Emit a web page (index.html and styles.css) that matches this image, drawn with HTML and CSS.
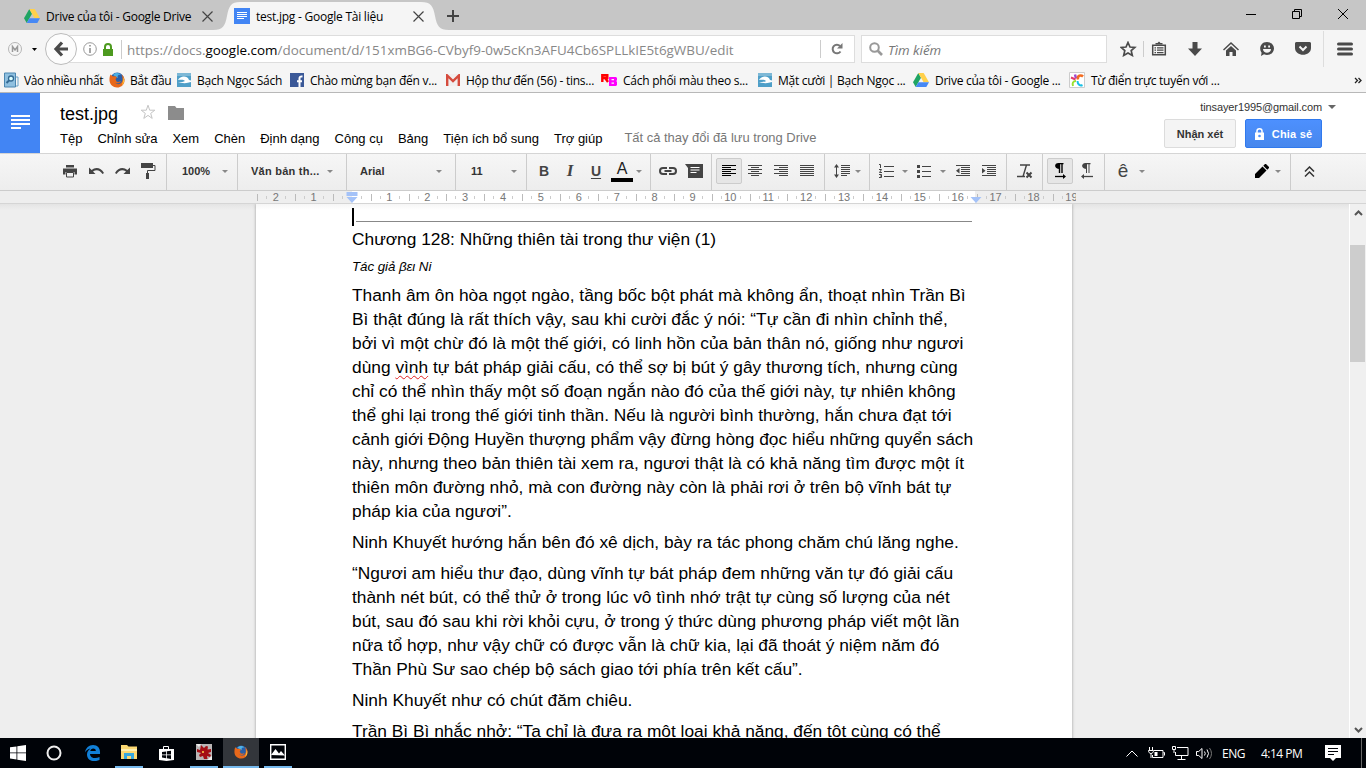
FILE: index.html
```html
<!DOCTYPE html>
<html lang="vi">
  <head>
    <meta charset="utf-8" />
    <title>test.jpg - Google Tài liệu</title>
    <link rel="stylesheet" href="styles.css">
  </head>
  <body>
    <!-- shared icons -->
    <svg width="0" height="0" class="defs">
      <symbol id="drive" viewBox="0 0 16 16">
        <path d="M5.3 1 0 10.2 2.7 15 8 5.7z" fill="#1fa463" />
        <path d="M5.3 1h5.4L16 10.2h-5.4z" fill="#ffd04b" />
        <path d="M5.4 10.2H16L13.3 15H2.7z" fill="#4688f4" />
      </symbol>
      <symbol id="wave" viewBox="0 0 14 14">
        <path d="M0 0h14v14H0z" fill="#4f9fc8" />
        <path d="M0 0h14v3H0z" fill="#7db8d6" />
        <path d="M1 7c2-4 9-5 11 0l2 .5V9c-4 1.500-9 1.500-13 0 3 0 6 0 7-1-1-1.500-4-1.500-7-1z" fill="#fff" />
      </symbol>
      <symbol id="fox" viewBox="0 0 16 16">
        <circle cx="8.2" cy="7.6" r="7" fill="#2a5fa8" />
        <path d="M4 3c2-3 7-2 8 0-3-1-4 1-3 3z" fill="#4db1e6" />
        <path d="M1.5 2.5 4 4.5c2-.5 3 0 4 1L6.5 7l1 2.500c2 1 3 0 4.500-.500-1 2.500-4 3-6 1.500 3 3.500 8 1 7.500-4C13.500 4 12.500 2.500 12 2c2.500 1.500 4 4.500 3.500 7.500-.8 4-4 6.200-7.500 6-4-.2-7.200-3-7.500-7C.4 6 .7 4 1.500 2.500z" fill="#e8681a" />
        <path d="M14.500 5c1.300 3 .8 6.500-2 8.700 1-2.200 2-5.200 2-8.700z" fill="#ffcb3d" />
      </symbol>
    </svg>

    <div class="tabs">
      <div class="tab">
        <svg width="16" height="16"><use href="#drive" /></svg>
        <span class="tab-title">Drive của tôi - Google Drive</span>
        <svg class="close" width="11" height="11"><path d="M.5.5l10 10m0-10-10 10" /></svg>
      </div>
      <div class="tab active">
        <svg class="tab-shape" width="236" height="28"><path d="M0 28c10 0 12-4 14-14C16 4 18 0 27 0h181c10 0 12 4 14 14s4 14 14 14z" fill="#f5f5f5" /></svg>
        <svg width="16" height="16"><path d="M0 0h16v16H0z" fill="#4285f4" /><path d="M3 4.500h10M3 6.500h10M3 8.500h10M3 10.500h7" stroke="#fff" /></svg>
        <span class="tab-title">test.jpg - Google Tài liệu</span>
        <svg class="close" width="11" height="11"><path d="M.5.5l10 10m0-10-10 10" /></svg>
      </div>
      <svg class="new-tab" width="12" height="12"><path d="M6 0v12M0 6h12" stroke="#444" stroke-width="2" /></svg>
      <div class="window-buttons">
        <svg width="12" height="12"><path d="M1 6.500h10" /></svg>
        <svg width="12" height="12"><path d="M1.500 3.500h7v7h-7zM3.500 3V1.500h7v7H9" /></svg>
        <svg width="12" height="12"><path d="M1 1l10 10m0-10L1 11" /></svg>
      </div>
    </div>

    <div class="nav">
      <svg class="gmail-m" width="14" height="14"><circle cx="7" cy="7" r="6.500" fill="none" stroke="#b5b5b5" /><path d="M4.500 10V4.500L7 8l2.500-3.500V10" fill="none" stroke="#999" stroke-width="1.500" /></svg>
      <svg class="nav-arrow" width="5" height="3"><path d="M0 0h5L2.500 3z" /></svg>
      <div class="back">
        <svg width="16" height="16"><path d="M9 1.500 3 8l6 6.500M3 8h12" fill="none" stroke="#4a4a4a" stroke-width="3.200" /></svg>
      </div>
      <div class="url">
        <svg width="14" height="14"><circle cx="7" cy="7" r="6.300" fill="none" stroke="#999" /><path d="M7 6v5M7 3v1.500" stroke="#888" stroke-width="1.500" /></svg>
        <svg class="lock" width="10" height="13"><path d="M0 6h10v7H0z" fill="#4d9a1f" /><path d="M2 7V4c0-4 6-4 6 0v3" fill="none" stroke="#4d9a1f" stroke-width="2" /></svg>
        <span class="address">https://docs.<b>google.com</b>/document/d/151xmBG6-CVbyf9-0w5cKn3AFU4Cb6SPLLkIE5t6gWBU/edit</span>
        <div class="reload">
          <svg width="12" height="12"><path d="M9.500 8.500A4.300 4.300 0 1 1 9 3" fill="none" stroke="#777" stroke-width="2" /><path d="M11.500 0v5.500H6z" fill="#777" /></svg>
        </div>
      </div>
      <div class="search">
        <svg width="14" height="14"><circle cx="5.500" cy="5.500" r="4.300" fill="none" stroke="#999" stroke-width="2" /><path d="M8.500 8.500l4.500 4.500" stroke="#999" stroke-width="2.600" /></svg>
        <span>Tìm kiếm</span>
      </div>
      <div class="nav-icons">
        <svg width="16" height="16"><path d="M8 1.500l2 4.500 4.800.4-3.600 3.200 1.100 4.800L8 11.900l-4.300 2.500 1.100-4.800L1.200 6.400 6 6z" fill="none" stroke="#4a4a4a" stroke-width="1.700" /></svg>
        <svg width="16" height="16"><path d="M1.700 4.200h12.600v9.600H1.700z" fill="none" stroke="#4a4a4a" stroke-width="1.500" /><path d="M4.500 3.500V2H6.500L8 .5 9.500 2h2v1.500z" fill="#4a4a4a" /><path d="M3.500 6.800h1.500M6 6.800h6.500M3.500 9.200h1.500M6 9.200h6.500M3.500 11.600h1.500M6 11.600h6.500" stroke="#4a4a4a" stroke-width="1.200" /></svg>
        <svg width="16" height="16"><path d="M5.500 1h5v6.500H15L8 15 1 7.500h4.500z" fill="#4a4a4a" /></svg>
        <svg width="16" height="16"><path d="M0 8.500 8 1l8 7.500-1 1L8 3 1 9.500z M3 9.500 8 5l5 4.500V15H9.500v-4h-3v4H3z" fill="#4a4a4a" /></svg>
        <svg width="16" height="16"><path d="M8 1c4 0 7 3 7 6.500S12 14 8 14c-1 0-2-.2-3-.7L2 15l.6-3.300C0 9 .6 1 8 1z" fill="#4a4a4a" /><path d="M4 8h8c0 5-8 5-8 0zM5 4.500h1.800v2H5zM9.200 4.500H11v2H9.200z" fill="#f5f5f5" /></svg>
        <svg width="16" height="16"><path d="M1.500 1h13C16 1 16 2 16 3v4c0 9-16 9-16 0V3c0-1 0-2 1.500-2z" fill="#4a4a4a" /><path d="M4.500 5.500 8 9l3.500-3.500" fill="none" stroke="#f5f5f5" stroke-width="2" /></svg>
      </div>
      <div class="menu-button">
        <svg width="16" height="14"><path d="M1.500 2h13M1.500 7h13M1.500 12h13" stroke="#4a4a4a" stroke-width="3" stroke-linecap="round" /></svg>
      </div>
    </div>

    <div class="bookmarks">
      <div class="bookmark b1"><svg width="15" height="16"><path d="M.5 1h11v14H.5z" fill="#8fc0e0" stroke="#4b86b0" /><path d="M12 5h2v9h-2" fill="none" stroke="#6ba3c8" /><circle cx="7" cy="6.500" r="2.500" fill="#dff" stroke="#346a94" stroke-width="1.300" /><path d="M5 8.500 2.500 11" stroke="#346a94" stroke-width="2" /></svg><span>Vào nhiều nhất</span></div>
      <div class="bookmark b2"><svg width="16" height="16"><use href="#fox" /></svg><span>Bắt đầu</span></div>
      <div class="bookmark b3"><svg width="14" height="14"><use href="#wave" /></svg><span>Bạch Ngọc Sách</span></div>
      <div class="bookmark b4"><svg width="14" height="14"><path d="M0 0h14v14H0z" fill="#3b5998" /><path d="M9.500 14V8.500M7 8.200h5M9.500 9V5.500Q9.500 3 12.500 3.500" fill="none" stroke="#fff" stroke-width="2" /></svg><span>Chào mừng bạn đến v...</span></div>
      <div class="bookmark b5"><svg width="14" height="12"><path d="M0 0h14v12H0z" fill="#f1eeee" /><path d="M1.200 12V1.500L7 7l5.800-5.500V12" fill="none" stroke="#d54b3d" stroke-width="2.400" /></svg><span>Hộp thư đến (56) - tins...</span></div>
      <div class="bookmark b6"><svg width="16" height="14"><path d="M1.300 9V2.300h5v2.700H2M4.500 5.500 7 9" fill="none" stroke="#f00" stroke-width="2.400" /><path d="M8 4h7l1 1v2l-.7 1 .7 1v3l-1 1H8z" fill="#f0f" /><path d="M10.500 6h2.500v1.200h-2.500zM10.500 9.500h2.500v1.200h-2.500z" fill="#f5f5f5" /></svg><span>Cách phối màu theo s...</span></div>
      <div class="bookmark b7"><svg width="14" height="14"><use href="#wave" /></svg><span>Mặt cười | Bạch Ngọc ...</span></div>
      <div class="bookmark b8"><svg width="16" height="16"><use href="#drive" /></svg><span>Drive của tôi - Google ...</span></div>
      <div class="bookmark b9"><svg width="16" height="16"><path d="M.5.5h15v15H.5z" fill="#fff" stroke="#ccc" /><path d="M7 6.500 6 2.500" stroke="#a04ad0" stroke-width="2.500" /><path d="M6.500 7.500 2 5.500" stroke="#e23c6b" stroke-width="2" /><path d="M9 7.500c-1-4 3-5 5-3" stroke="#f36c21" stroke-width="2.500" fill="none" /><path d="M7 9c-3 0-4 2-3 5" stroke="#9be030" stroke-width="2" fill="none" /><path d="M8.500 9c0 4 3 5 5 4" stroke="#19c0e5" stroke-width="2" fill="none" /></svg><span>Từ điển trực tuyến với ...</span></div>
      <svg class="more" width="8" height="7"><path d="M1 1l2.500 2.500L1 6M4.500 1 7 3.500 4.500 6" fill="none" stroke="#222" stroke-width="1.300" /></svg>
    </div>

    <div class="header">
      <div class="logo">
        <svg width="19" height="14"><path d="M0 1h19M0 5h19M0 9h19M0 13h10" stroke="#fff" stroke-width="2" /></svg>
      </div>
      <div class="title-area">
        <div class="title-row">
          <span class="title">test.jpg</span>
          <svg class="star" width="16" height="16"><path d="M8 1.200l1.700 5h5.100l-4.100 3.200 1.500 5L8 11.400l-4.200 3 1.500-5L1.200 6.200h5.100z" fill="none" stroke="#c4c4c4" /></svg>
          <svg width="16" height="14"><path d="M0 0h7l1.500 2H16v12H0z" fill="#8c8c8c" /></svg>
        </div>
        <div class="menus">
          <span>Tệp</span><span>Chỉnh sửa</span><span>Xem</span><span>Chèn</span><span>Định dạng</span><span>Công cụ</span><span>Bảng</span><span>Tiện ích bổ sung</span><span>Trợ giúp</span><span class="saved">Tất cả thay đổi đã lưu trong Drive</span>
        </div>
      </div>
      <div class="account">
        <div class="email"><span>tinsayer1995@gmail.com</span> <i class="caret"></i></div>
        <div class="actions">
          <div class="button">Nhận xét</div>
          <div class="button share">
            <svg width="9" height="12"><path d="M0 4.500h9V12H0z" fill="#fff" /><path d="M2 5V3c0-3 5-3 5 0v2" fill="none" stroke="#fff" stroke-width="1.500" /><circle cx="4.500" cy="8" r="1.300" fill="#4d90fe" /></svg>
            Chia sẻ
          </div>
        </div>
      </div>
    </div>

    <div class="toolbar">
      <div class="group g1">
        <div class="tool"><svg width="14" height="14"><path d="M3 1h8v2.500H3zM0 4.500h14v6h-2.500V8h-9v2.500H0z" fill="#444" /><path d="M3.500 8.500h7v4.500h-7z" fill="none" stroke="#444" /></svg></div>
        <div class="tool"><svg width="15" height="14"><path d="M0 3.500V10h6.500L4 7.500C7.500 5 11 6 13.500 10L15 9C12 3.500 6.500 2.500 2.600 6z" fill="#444" /></svg></div>
        <div class="tool"><svg width="15" height="14"><path d="M15 3.500V10H8.500L11 7.500C7.500 5 4 6 1.500 10L0 9C3 3.500 8.500 2.500 12.400 6z" fill="#444" /></svg></div>
        <div class="tool"><svg width="15" height="16"><path d="M0 0h12v5H0z" fill="#444" /><path d="M12 2.500h2v5H6.500V16" fill="none" stroke="#444" /><path d="M5 10h3v6H5z" fill="#444" /></svg></div>
      </div>
      <div class="group select g2"><span>100%</span><i class="caret"></i></div>
      <div class="group select g3"><span>Văn bản th...</span><i class="caret"></i></div>
      <div class="group select g4"><span>Arial</span><i class="caret"></i></div>
      <div class="group select g5"><span>11</span><i class="caret"></i></div>
      <div class="group g6">
        <div class="tool bold">B</div>
        <div class="tool italic">I</div>
        <div class="tool underline">U</div>
        <div class="tool color">A</div>
        <i class="caret"></i>
      </div>
      <div class="group g7">
        <div class="tool"><svg width="18" height="8"><path d="M8 1H4C0 1 0 7 4 7h4M10 1h4c4 0 4 6 0 6h-4M5.500 4h7" fill="none" stroke="#444" stroke-width="2" /></svg></div>
        <div class="tool"><svg width="18" height="15"><path d="M0 0h18v14H3V4z" fill="#444" /><path d="M5.500 3.500h9M5.500 6h9M5.500 8.500h6" stroke="#fff" /></svg></div>
      </div>
      <div class="group g8">
        <div class="tool pressed"><svg width="14" height="12"><path d="M0 .5h14M0 2.500h9M0 4.500h14M0 6.500h9M0 8.500h14M0 10.500h9" stroke="#000" /></svg></div>
        <div class="tool"><svg width="14" height="12"><path d="M0 .5h14M3 2.500h8M0 4.500h14M3 6.500h8M0 8.500h14M3 10.500h8" stroke="#444" /></svg></div>
        <div class="tool"><svg width="14" height="12"><path d="M0 .5h14M5 2.500h9M0 4.500h14M5 6.500h9M0 8.500h14M5 10.500h9" stroke="#444" /></svg></div>
        <div class="tool"><svg width="14" height="12"><path d="M0 .5h14M0 2.500h14M0 4.500h14M0 6.500h14M0 8.500h14M0 10.500h14" stroke="#444" /></svg></div>
      </div>
      <div class="group g9">
        <div class="tool"><svg width="17" height="14"><path d="M2.500 2v10M7 1.500h9M7 3.500h9M7 5.500h9M7 7.500h9M7 9.500h9M7 11.500h6" stroke="#444" /><path d="M0 3.500 2.500 0 5 3.500zM0 10.500 2.500 14 5 10.500z" fill="#444" /></svg></div>
        <i class="caret"></i>
      </div>
      <div class="group g10">
        <div class="tool"><svg width="15" height="14"><path d="M5 2.500h10M5 7.500h10M5 12.500h10M0 .500h1.500V4M0 5.500h2.500L.500 8.500H3M0 10.500h2.500v3H0M1 12h1.500" fill="none" stroke="#444" /></svg></div>
        <i class="caret"></i>
        <div class="tool"><svg width="14" height="14"><path d="M5 2.500h9M5 7.500h9M5 12.500h9" stroke="#444" /><path d="M0 1h3v3H0zM0 6h3v3H0zM0 11h3v3H0z" fill="#444" /></svg></div>
        <i class="caret"></i>
        <div class="tool"><svg width="14" height="12"><path d="M0 .5h14M5 2.500h9M5 4.500h9M5 6.500h9M5 8.500h9M0 10.500h14" stroke="#444" /><path d="M3.500 3v5.500L0 5.700z" fill="#444" /></svg></div>
        <div class="tool"><svg width="14" height="12"><path d="M0 .5h14M5 2.500h9M5 4.500h9M5 6.500h9M5 8.500h9M0 10.500h14" stroke="#444" /><path d="M0 3v5.500l3.500-2.800z" fill="#444" /></svg></div>
      </div>
      <div class="group g11">
        <div class="tool"><svg width="16" height="15"><path d="M3 1h10M9.500 1 6 12.500M0 12.500h8" fill="none" stroke="#444" stroke-width="1.400" /><path d="M9.500 8.500l5 5m0-5-5 5" stroke="#444" stroke-width="2" /></svg></div>
      </div>
      <div class="group g12">
        <div class="tool pressed"><svg width="13" height="16"><path d="M5.500 10V1M8 10V1" stroke="#000" stroke-width="1.400" /><path d="M9.500 0v1.200H6V6C-.5 6 0 0 4.500 0z" /><path d="M1 13.500h9" stroke="#000" stroke-width="1.300" /><path d="M9 11v5l3-2.500z" /></svg></div>
        <div class="tool"><svg width="13" height="16"><path d="M6.500 10V1M9 10V1" stroke="#444" /><path d="M10.500 0v1.200H7V6C.5 6 1 0 5.500 0z" fill="#444" /><path d="M3 13.500h10" stroke="#444" stroke-width="1.300" /><path d="M4 11v5l-3-2.500z" fill="#444" /></svg></div>
      </div>
      <div class="group g13">
        <div class="tool input-tool">ê</div>
        <i class="caret"></i>
        <div class="tool pencil"><svg width="14" height="14"><path d="M0 14v-4L7.500 2.500l4 4L4 14zM8.300 1.700 10 0h1l3 3v1l-1.700 1.700z" fill="#000" /></svg></div>
        <i class="caret"></i>
      </div>
      <div class="tool collapse"><svg width="11" height="11"><path d="M1 5.500 5.500 1 10 5.500M1 10.500 5.500 6l4.500 4.500" fill="none" stroke="#333" stroke-width="1.500" /></svg></div>
    </div>

    <div class="ruler">
      <div class="scale">
        <span>2</span><span>1</span><span></span><span>1</span><span>2</span><span>3</span><span>4</span><span>5</span><span>6</span><span>7</span><span>8</span><span>9</span><span>10</span><span>11</span><span>12</span><span>13</span><span>14</span><span>15</span><span>16</span><span>17</span><span>18</span><span>19</span>
        <svg class="marker left" width="12" height="12"><path d="M.500 0h11v4H.500zM.500 5h11L6 11z" fill="#a4c2f8" /></svg>
        <svg class="marker right" width="12" height="6"><path d="M.500 0h11L6 6z" fill="#a4c2f8" /></svg>
      </div>
    </div>

    <div class="workspace">
      <div class="page">
        <div class="rule"><i class="text-cursor"></i></div>
        <p>Chương 128: Những thiên tài trong thư viện (1)</p>
        <p class="author">Tác giả βει Ni</p>
        <p>Thanh âm ôn hòa ngọt ngào, tầng bốc bột phát mà không ẩn, thoạt nhìn Trần Bì<br>
          Bì thật đúng là rất thích vậy, sau khi cười đắc ý nói: “Tự cần đi nhìn chỉnh thể,<br>
          bởi vì một chừ đó là một thế giới, có linh hồn của bản thân nó, giống như ngươi<br>
          dùng <span class="misspelled">vình</span> tự bát pháp giải cấu, có thể sợ bị bút ý gây thương tích, nhưng cùng<br>
          chỉ có thể nhìn thấy một số đoạn ngắn nào đó của thế giới này, tự nhiên không<br>
          thể ghi lại trong thế giới tinh thần. Nếu là người bình thường, hắn chưa đạt tới<br>
          cảnh giới Động Huyền thượng phẩm vậy đừng hòng đọc hiểu những quyển sách<br>
          này, nhưng theo bản thiên tài xem ra, ngươi thật là có khả năng tìm được một ít<br>
          thiên môn đường nhỏ, mà con đường này còn là phải rơi ở trên bộ vĩnh bát tự<br>
          pháp kia của ngươi”.</p>
        <p>Ninh Khuyết hướng hắn bên đó xê dịch, bày ra tác phong chăm chú lăng nghe.</p>
        <p>“Ngươi am hiểu thư đạo, dùng vĩnh tự bát pháp đem những văn tự đó giải cấu<br>
          thành nét bút, có thể thử ở trong lúc vô tình nhớ trật tự cùng số lượng của nét<br>
          bút, sau đó sau khi rời khỏi cựu, ở trong ý thức dùng phương pháp viết một lần<br>
          nữa tổ hợp, như vậy chữ có được vẫn là chữ kia, lại đã thoát ý niệm năm đó<br>
          Thần Phù Sư sao chép bộ sách giao tới phía trên kết cấu”.</p>
        <p>Ninh Khuyết như có chút đăm chiêu.</p>
        <p>Trần Bì Bì nhắc nhở: “Ta chỉ là đưa ra một loại khả năng, đến tột cùng có thể</p>
      </div>
      <div class="scrollbar">
        <svg width="9" height="6"><path d="M1 5l3.500-3.500L8 5" /></svg>
        <div class="thumb"></div>
        <svg width="9" height="6"><path d="M1 1l3.500 3.500L8 1" /></svg>
      </div>
    </div>

    <div class="taskbar">
      <div class="app"><svg width="16" height="16"><path d="M0 2.300 6.500 1.400v6H0zM7.300 1.300 16 0v7.400H7.300zM0 8.300h6.500v6.200L0 13.600zM7.300 8.300H16V16l-8.700-1.300z" fill="#fff" /></svg></div>
      <div class="app"><svg width="16" height="16"><circle cx="8" cy="8" r="6.500" fill="none" stroke="#eee" stroke-width="2" /></svg></div>
      <div class="app edge"><svg width="16" height="16"><path d="M0 7.500C.5 3 4 0 8 0c5 0 7.500 3.500 7 9H5c.2 4.500 6 5 9.500 3v3C9 17.500 2 16 2 9.500c0-3 1.500-4.500 3.500-6C3 4 1 5.500 0 7.500zM5.300 6h5.500C11 2.500 5.500 2.500 5.300 6z" fill="#1180d8" /></svg></div>
      <div class="app open"><svg width="16" height="14"><path d="M0 0h6l1.500 1.500H16V14H0z" fill="#fbd872" /><path d="M0 4h16v2H0z" fill="#fff0b0" /><path d="M3 14V8h10v6h-3v-3H6v3z" fill="#37a8de" /></svg></div>
      <div class="app"><svg width="15" height="16"><path d="M0 4h15v11L7.500 16 0 15z" fill="#fff" /><path d="M4.500 4V1.500h5V4" fill="none" stroke="#fff" /><path d="M3 7l4-.6v3H3zM7.800 6.300 12 5.700v3.700H7.800zM3 10.200h4v3l-4-.6zM7.800 10.200H12v3.700l-4.200-.6z" fill="#000308" /></svg></div>
      <div class="app open red"><svg width="16" height="16"><path d="M0 0h16v16H0z" fill="#b9b5b5" /><path d="M0 0h5l-2 3zM11 16l5-4v4z" fill="#eee" /><path d="M5 1l3 3 2-2 2 .5-.5 3L15 5v3l-3 1 3 2-1 2-3-1 .5 3H8l-1-3-3 1-1-2 2-2-4-1V5l3 1z" fill="#a40e14" /><path d="M6 7h2v2H6z" fill="#e9a13d" /></svg></div>
      <div class="app open current"><svg width="14" height="14"><use href="#fox" /></svg></div>
      <div class="app open photos"><svg width="16" height="16"><path d="M.7.700h14.600v14.600H.7z" fill="#000308" stroke="#fff" stroke-width="1.400" /><path d="M1 11 5.500 5 9 9.500 11 7l4 4.500z" fill="#fff" /></svg></div>
      <div class="tray">
        <svg width="12" height="7"><path d="M.5 6.500 6 1l5.500 5.500" /></svg>
        <svg class="battery" width="17" height="12"><path d="M6 3.500h9v7H4.500V8M15.500 5.500h1v3M1.500 0v3M4.500 0v3M.5 3.500h5c0 4-5 4-5 0zM3 6v5" /><path d="M6.500 5h3v4h-3z" fill="#fff" stroke="none" /></svg>
        <svg class="network" width="17" height="14"><path d="M5 1.500h11v8H3.500V6M9.500 10v3M5.500 13.500h8M.5.500h3v3h-3zM2 4v3" /></svg>
        <svg class="volume" width="16" height="13"><path d="M.5 4.500h2.200L6 1.500v10L2.700 8.500H.5zM8.500 4.500q1.500 2 0 4M11 2.500q3 4 0 8" /><path d="M13.500 1q4 5.500 0 11" stroke="#777" /></svg>
        <span class="lang">ENG</span>
        <span class="clock">4:14 PM</span>
        <svg class="notice" width="16" height="16"><path d="M0 0h16v13h-5l-3 3-3-3H0z" fill="#fff" stroke="none" /><path d="M3 3.500h10M3 6.500h10M3 9.500h6" stroke="#000308" /></svg>
        <div class="show-desktop"></div>
      </div>
    </div>
  </body>
</html>
```
FILE: styles.css
```css
* {
  margin: 0;
  padding: 0;
  box-sizing: border-box;
}
body {
  width: 1366px;
  height: 768px;
  overflow: hidden;
  display: flex;
  flex-direction: column;
  font-family: "Liberation Sans", Arial, sans-serif;
  background-color: #eee;
  color: #000;
}
svg {
  display: block;
  flex: none;
}
.defs {
  position: absolute;
}
.caret {
  flex: none;
  width: 0;
  height: 0;
  border: 3px solid transparent;
  border-top-color: #888;
  border-bottom: none;
}

/* browser tabs */
.tabs {
  display: flex;
  height: 30px;
  padding-top: 2px;
  background-color: #c6c6c6;
}
.tabs,
.nav,
.bookmarks {
  flex: none;
  font-family: "Open Sans", "Noto Sans", sans-serif;
  font-size: 12px;
}
.tab {
  display: flex;
  align-items: center;
  width: 213px;
  height: 28px;
  padding-left: 24px;
}
.tab-title {
  width: 157px;
  margin-left: 6px;
  white-space: nowrap;
  letter-spacing: -0.24px;
}
.tab.active {
  position: relative;
  width: 236px;
  padding-left: 21px;
}
.tab.active > * {
  position: relative;
}
.tab.active .tab-shape {
  position: absolute;
  left: 0;
  top: 0;
}
.close {
  fill: none;
  stroke: #444;
  stroke-width: 1.2;
}
.new-tab {
  margin: 8px 0 0 -2px;
}
.window-buttons {
  display: flex;
  gap: 34px;
  margin: 6px 17px 0 auto;
}
.window-buttons svg {
  fill: none;
  stroke: #000;
}

/* address bar */
.nav {
  display: flex;
  align-items: center;
  height: 38px;
  background-color: #f5f5f5;
}
.gmail-m {
  margin-left: 8px;
}
.nav-arrow {
  margin-left: 10px;
}
.back {
  display: flex;
  align-items: center;
  justify-content: center;
  width: 32px;
  height: 32px;
  margin-left: 8px;
  border: 1px solid #bbb;
  border-radius: 50%;
  background-color: #fcfcfc;
  z-index: 1;
}
.url,
.search {
  display: flex;
  align-items: center;
  height: 28px;
  background-color: #fff;
  border: 1px solid #ddd;
}
.url {
  width: 788px;
  margin-left: -10px;
  padding-left: 15px;
  color: #888;
}
.lock {
  margin-left: 6px;
}
.address {
  flex: 1;
  margin-left: 8px;
  padding: 1px 0 0 5px;
  border-left: 1px solid #ccc;
  font-size: 13.43px;
  line-height: 18px;
  white-space: nowrap;
}
.address b {
  color: #000;
  font-weight: 400;
}
.reload {
  width: 34px;
  padding: 3px 0 3px 10px;
  border-left: 1px solid #ccc;
}
.search {
  width: 246px;
  margin-left: 6px;
  padding-left: 7px;
  color: #777;
  font-size: 13.3px;
  font-style: italic;
}
.search span {
  margin: 1px 0 0 5px;
}
.nav-icons {
  display: flex;
  gap: 20px;
  margin-left: 13px;
}
.nav-icons svg:first-child {
  width: 24px;
  margin-right: -13px;
  border-right: 1px solid #ccc;
}
.menu-button {
  display: flex;
  align-items: center;
  height: 36px;
  margin-left: 12px;
  padding-left: 13px;
  border-left: 1px solid #ddd;
}

.bookmarks {
  display: flex;
  align-items: center;
  height: 25px;
  padding-left: 4px;
  border-bottom: 1px solid #b8b8b8;
  background-color: #f5f5f5;
}
.bookmark {
  display: flex;
  align-items: center;
  gap: 6px;
  flex: none;
  white-space: nowrap;
  letter-spacing: -0.25px;
}
.b1 { width: 105px; gap: 5px; letter-spacing: -0.4px; }
.b2 { width: 68px; gap: 5px; }
.b3 { width: 113px; }
.b4 { width: 156px; }
.b5 { width: 155px; }
.b6 { width: 157px; }
.b7 { width: 155px; }
.b8 { width: 156px; }
.more {
  margin: 0 4px 0 auto;
}

/* document header */
.header {
  display: flex;
  flex: none;
  height: 60px;
  background-color: #fff;
}
.logo {
  width: 40px;
  padding: 22px 0 0 11px;
  background-color: #4285f4;
}
.title-area {
  margin-left: 20px;
}
.title-row {
  display: flex;
  align-items: center;
  height: 36px;
  padding-top: 4px;
}
.title {
  margin-top: 2px;
  font-size: 18px;
}
.star {
  margin: -3px 12px 0 22px;
}
.menus {
  display: flex;
  gap: 15px;
  font-size: 13px;
  line-height: 19px;
}
.menus .saved {
  margin: -1px 0 0 7px;
  color: #777;
  font-size: 12.95px;
}
.account {
  margin-left: auto;
  padding-right: 30px;
}
.email {
  display: flex;
  align-items: center;
  justify-content: flex-end;
  gap: 6px;
  height: 26px;
  padding-top: 2px;
  font-size: 11px;
  color: #333;
}
.email span {
  letter-spacing: -0.12px;
}
.email .caret {
  border-width: 4px 4px 0;
  border-top-color: #666;
}
.actions {
  display: flex;
  gap: 9px;
  margin-right: 14px;
}
.button {
  display: flex;
  align-items: center;
  justify-content: center;
  width: 72px;
  height: 29px;
  border: 1px solid #dcdcdc;
  border-radius: 2px;
  background-color: #f4f4f4;
  color: #333;
  font-size: 11px;
  font-weight: bold;
}
.share {
  gap: 8px;
  width: 77px;
  border-color: #3079ed;
  background: linear-gradient(#4d90fe, #4787ed);
  color: #fff;
  letter-spacing: 0.2px;
}

/* toolbar */
.toolbar {
  display: flex;
  flex: none;
  height: 37px;
  border-top: 1px solid #d5d5d5;
  background: linear-gradient(#f6f6f6, #ededed);
}
.group {
  display: flex;
  align-items: center;
  padding-bottom: 2px;
  border-right: 1px solid #ccc;
}
.tool {
  display: flex;
  align-items: center;
  justify-content: center;
  flex: none;
  width: 26px;
  height: 26px;
  align-self: center;
  color: #444;
}
.pressed {
  border: 1px solid #ccc;
  border-radius: 2px;
  background-color: #e6e6e6;
}
.select {
  justify-content: space-between;
  padding-right: 9px;
  color: #333;
  font-size: 11px;
  font-weight: bold;
}
.g1 { width: 167px; padding-left: 57px; }
.g2 { width: 71px; padding-left: 15px; }
.g3 { width: 109px; padding-left: 13px; padding-right: 13px; letter-spacing: 0.25px; }
.g4 { width: 109px; padding-left: 13px; padding-right: 13px; }
.g5 { width: 71px; padding-left: 15px; }
.g6 { width: 124px; padding-left: 4px; }
.g7 { width: 61px; padding-left: 4px; }
.g8 { width: 113px; padding-left: 4px; }
.g9 { width: 45px; padding-left: 4px; }
.g10 { width: 137px; padding-left: 3px; }
.g11 { width: 36px; padding-left: 5px; }
.g12 { width: 62px; padding-left: 4px; }
.g13 { width: 186px; padding-left: 5px; }
.g10 .caret {
  margin-left: 3px;
}
.g10 .caret + .tool {
  margin-left: 3px;
}
.g10 .caret + .tool:nth-child(5) {
  margin-left: 4px;
}
.g6 .caret {
  margin-left: 1px;
}
.g13 .caret {
  margin-left: 3px;
}
.bold,
.italic {
  font: bold 15px "Liberation Serif", serif;
}
.bold {
  font-family: "Liberation Sans", sans-serif;
  font-size: 14px;
}
.italic {
  font-style: italic;
  font-size: 17px;
}
.underline {
  font-size: 14px;
  font-weight: bold;
  text-decoration: underline;
  text-underline-offset: 2px;
}
.tool.color {
  width: 22px;
  height: 22px;
  margin: 0 2px;
  border-bottom: 4px solid #000;
  color: #222;
  font-size: 16px;
}
.input-tool {
  font-size: 19px;
}
.pencil {
  margin-left: 104px;
}
.g13 .pencil + .caret {
  margin-left: 0;
}
.collapse {
  margin: -2px 0 0 5px;
}

/* ruler */
.ruler {
  flex: none;
  height: 14px;
  padding-left: 256px;
  border-top: 1px solid #ccc;
  border-bottom: 1px solid #d5d5d5;
  background-color: #eee;
}
.scale {
  position: relative;
  display: flex;
  width: 820px;
  height: 12px;
  overflow: hidden;
  background: linear-gradient(#fff, #fff) 96px 0 / 623px 12px no-repeat;
}
.scale span {
  flex: none;
  width: 37.9px;
  padding-left: 1.5px;
  color: #777;
  font-size: 11px;
  line-height: 13px;
  text-align: center;
  background:
    linear-gradient(#bbb, #bbb) 1px 3px / 1px 7px no-repeat,
    linear-gradient(#ccc, #ccc) 10px 5px / 1px 3px no-repeat,
    linear-gradient(#ccc, #ccc) 29px 5px / 1px 3px no-repeat;
}
.marker {
  position: absolute;
  top: 1px;
  left: 90px;
}
.marker.right {
  top: 6px;
  left: 714px;
}

/* document */
.workspace {
  display: flex;
  flex: 1;
  min-height: 0;
  overflow: hidden;
  background: linear-gradient(#e4e4e4, #eee 6px);
}
.page {
  width: 816px;
  height: 560px;
  margin-left: 256px;
  padding: 4px 0 0 96px;
  background: linear-gradient(#f6f6f6, #fff 6px);
  box-shadow: 0 0 3px rgba(0, 0, 0, 0.35);
  font-size: 17.33px;
  line-height: 24px;
}
.rule {
  position: relative;
  width: 616px;
  height: 14px;
  margin: 0 0 5px 4px;
  border-bottom: 1px solid #888;
}
.text-cursor {
  position: absolute;
  left: -4px;
  top: 0;
  width: 2px;
  height: 18px;
  background-color: #000;
}
.page p {
  margin-bottom: 7px;
  white-space: nowrap;
}
.page .author {
  margin: -3px 0 4px;
  font-size: 13.33px;
  font-style: italic;
  letter-spacing: -0.06px;
}
.misspelled {
  text-decoration: underline wavy #e02020 1px;
  text-underline-offset: 2px;
}
.scrollbar {
  display: flex;
  flex-direction: column;
  align-items: center;
  width: 17px;
  margin-left: auto;
  padding: 6px 0 5px;
  border-left: 1px solid #fff;
  background-color: #f0f0f0;
}
.scrollbar svg {
  fill: none;
  stroke: #555;
  stroke-width: 2;
}
.thumb {
  width: 15px;
  height: 117px;
  margin: 29px 1px auto 0;
  background-color: #cdcdcd;
}

/* taskbar */
.taskbar {
  display: flex;
  flex: none;
  height: 30px;
  background-color: #000308;
}
.app {
  display: flex;
  align-items: center;
  justify-content: center;
  width: 36px;
  height: 30px;
}
.app.open {
  width: 28px;
  margin: 0 5px;
  border-bottom: 2px solid #76b9ed;
}
.app.edge {
  margin-left: 3px;
  margin-right: -1px;
}
.app.red {
  margin-left: 6px;
}
.app.current {
  width: 36px;
  margin: 0;
  background-color: #33363b;
}
.tray {
  display: flex;
  align-items: center;
  width: 240px;
  margin-left: auto;
  color: #fff;
  font-family: "Open Sans", "Noto Sans", sans-serif;
  font-size: 12px;
  letter-spacing: -0.5px;
}
.tray svg {
  fill: none;
  stroke: #fff;
}
.battery {
  margin-left: 10px;
}
.network,
.volume {
  margin-left: 7px;
}
.lang {
  margin-left: 10px;
}
.clock {
  margin-left: 16px;
}
.tray .notice {
  margin-left: auto;
}
.show-desktop {
  width: 5px;
  height: 30px;
  margin-left: 20px;
  border-left: 1px solid #666;
}
```
